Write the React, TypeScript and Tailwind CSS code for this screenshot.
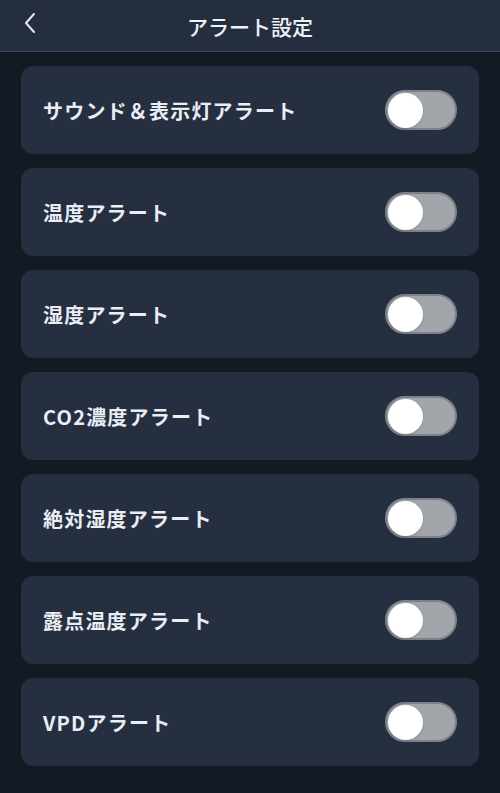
import { useState } from "react";

const items = [
  "サウンド＆表示灯アラート",
  "温度アラート",
  "湿度アラート",
  "CO2濃度アラート",
  "絶対湿度アラート",
  "露点温度アラート",
  "VPDアラート",
];

const Toggle = ({ on, onClick }: { on: boolean; onClick: () => void }) => (
  <button
    onClick={onClick}
    className={`relative w-[72px] h-[40px] rounded-full border-2 border-[#7d828a] flex items-center px-[1px] ${
      on ? "bg-[#3b82f6] justify-end" : "bg-[#a2a5aa] justify-start"
    }`}
  >
    <span className="w-[35px] h-[35px] rounded-full bg-white shadow" />
  </button>
);

const App = () => {
  const [state, setState] = useState<boolean[]>(items.map(() => false));

  return (
    <div
      className="w-[500px] h-[793px] bg-[#141a24] flex flex-col"
      style={{ fontFamily: '"Noto Sans CJK JP", "Noto Sans", sans-serif' }}
    >
      <header className="h-[52px] bg-[#252e3e] border-b border-[#3a4353] flex items-center relative">
        <button className="absolute left-[20px] top-[10px] text-[#e6e9ef]">
          <svg width="20" height="26" viewBox="0 0 20 26" fill="none">
            <path d="M14 4 L6 13 L14 22" stroke="currentColor" strokeWidth="2" strokeLinecap="round" strokeLinejoin="round" />
          </svg>
        </button>
        <h1 className="flex-1 text-center text-[21px] font-medium text-[#eef1f5] leading-none pt-[1px]">アラート設定</h1>
      </header>
      <main className="flex flex-col gap-[14px] px-[21px] pt-[14px]">
        {items.map((label, i) => (
          <div
            key={label}
            className="h-[88px] bg-[#262f40] rounded-[12px] flex items-center justify-between pl-[22px] pr-[22px]"
          >
            <span className="text-[20px] font-bold text-[#e9edf4] tracking-[1.2px] pt-[2px]">{label}</span>
            <Toggle
              on={state[i]}
              onClick={() => setState((s) => s.map((v, j) => (j === i ? !v : v)))}
            />
          </div>
        ))}
      </main>
    </div>
  );
};

export default App;
